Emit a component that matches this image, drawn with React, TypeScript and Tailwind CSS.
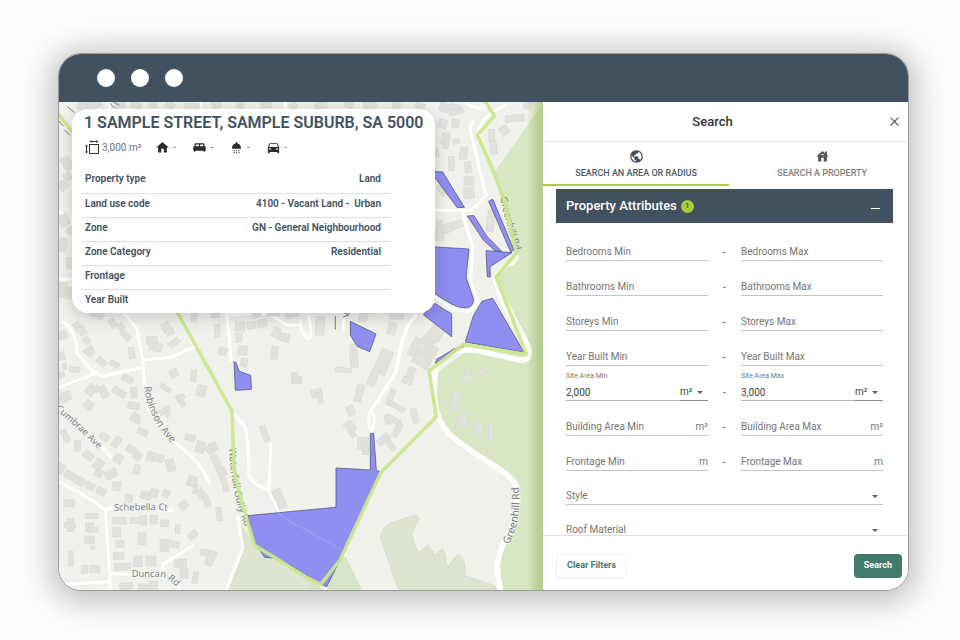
import React from "react";
import { MdClose, MdDirectionsCar, MdHome, MdHouse, MdKingBed, MdPublic, MdShower } from "react-icons/md";

/* ---------- Map ---------- */

type Box = [number, number, number, number, number];

// Building footprints: centre x, centre y, width, height, rotation.
const westBuildings: Box[] = [
  [20, 75, 26, 26, -20], [18, 138, 16, 24, -15], [64, 50, 20, 28, -30], [78, 62, 20, 28, -30], [92, 91, 20, 22, -35],
  [97, 120, 30, 16, -40], [104, 128, 22, 18, -40], [136, 155, 30, 20, 42], [176, 162, 30, 16, 28], [170, 40, 26, 20, 48],
  [194, 50, 18, 18, 48], [209, 76, 36, 18, 46], [227, 129, 18, 34, -8], [288, 92, 32, 24, 0], [299, 111, 38, 24, 10],
  [330, 52, 24, 30, -25], [342, 66, 24, 18, -25], [354, 98, 36, 18, -35], [414, 22, 16, 28, 5], [478, 16, 24, 14, 0], [484, 62, 16, 38, 0],
  [500, 124, 26, 22, 15], [552, 50, 28, 30, 5], [549, 84, 18, 28, 0], [586, 46, 26, 20, -10], [618, 40, 28, 22, -12],
  [660, 68, 20, 30, 22], [684, 82, 34, 24, 15], [656, 128, 20, 38, 5], [560, 121, 28, 28, 4], [564, 158, 20, 26, 10],
  [715, 204, 18, 34, 0], [724, 210, 24, 20, 0], [700, 14, 26, 14, -20], [56, 179, 30, 16, 6], [25, 170, 12, 18, 0], [16, 194, 18, 16, -20],
  [214, 206, 34, 20, 26], [105, 240, 28, 32, 42], [122, 236, 18, 18, 42], [142, 246, 22, 36, -28], [190, 247, 42, 20, 30], [233, 248, 18, 32, -3],
  [30, 258, 30, 26, -14], [22, 268, 24, 18, 0], [98, 285, 28, 24, 38], [233, 287, 34, 20, 10], [236, 322, 22, 26, 35],
  [246, 332, 12, 18, 20], [260, 366, 32, 18, 25], [328, 234, 34, 14, 33], [354, 190, 24, 24, -28], [413, 197, 16, 36, 4],
  [436, 242, 28, 34, 12], [374, 272, 14, 38, -32], [374, 264, 26, 14, -32], [326, 302, 34, 16, -32], [336, 312, 14, 16, 40], [626, 371, 18, 48, -18],
  [28, 378, 18, 38, -28], [64, 407, 18, 32, 0], [97, 437, 22, 32, -50], [127, 464, 26, 32, 35], [128, 490, 22, 22, 30], [145, 381, 28, 20, 28],
  [182, 396, 20, 34, 38], [187, 446, 26, 26, 28], [165, 492, 36, 24, -26], [13, 474, 24, 28, 30], [40, 495, 30, 22, 30],
  [70, 513, 32, 24, 28], [102, 528, 28, 20, 28], [135, 544, 28, 20, 24], [181, 529, 24, 26, 10], [242, 478, 18, 28, 14],
  [225, 418, 26, 20, 28], [244, 438, 24, 24, 40], [284, 440, 22, 28, 14], [308, 444, 28, 22, 18], [343, 466, 26, 36, -12],
  [402, 383, 30, 18, 16], [433, 411, 26, 34, 16], [464, 418, 28, 26, 38], [474, 410, 18, 26, -30], [480, 454, 20, 38, -24],
  [497, 486, 26, 28, -26], [506, 524, 16, 42, -18], [408, 514, 28, 30, 18], [418, 536, 10, 30, 18], [435, 552, 22, 30, -32], [452, 574, 18, 34, -20],
  [382, 586, 26, 24, -40], [489, 612, 16, 40, -8], [218, 565, 22, 24, 0], [266, 555, 24, 24, 18], [294, 549, 24, 24, 20],
  [272, 563, 26, 12, 20], [330, 550, 20, 22, 22], [40, 580, 32, 22, 2], [44, 645, 18, 40, 0], [42, 646, 32, 16, 0],
  [107, 618, 38, 16, 2], [100, 652, 24, 26, 0], [112, 660, 28, 14, 0], [100, 690, 30, 24, 0], [110, 714, 14, 8, 0],
  [45, 747, 16, 44, 0], [86, 778, 18, 24, 0], [116, 777, 32, 20, 0], [190, 632, 42, 20, 0], [236, 632, 28, 18, 0],
  [262, 631, 20, 28, 0], [293, 629, 22, 26, 0], [326, 640, 24, 20, 5], [182, 667, 24, 28, 0], [192, 702, 24, 20, 0],
  [258, 686, 24, 36, 0], [325, 706, 26, 36, 0], [350, 702, 40, 20, 12], [365, 657, 14, 26, 0], [410, 675, 30, 20, -38],
  [188, 738, 32, 20, 0], [246, 754, 26, 32, 0], [285, 753, 30, 30, 0], [200, 770, 50, 20, -3], [373, 760, 38, 26, 0],
  [384, 790, 24, 30, 0], [418, 803, 16, 34, 10], [455, 730, 44, 20, 12], [464, 746, 22, 44, 26], [210, 829, 38, 20, -5],
  [292, 826, 26, 24, 0], [262, 830, 30, 16, 0], [670, 566, 26, 58, -24],
];

const centreBuildings: Box[] = [
  [60, 48, 26, 56, 4], [290, 18, 40, 20, 0], [190, 20, 24, 34, 18], [276, 56, 24, 36, 12], [162, 146, 24, 52, -6], [158, 112, 16, 20, 0],
  [130, 180, 48, 14, 6], [250, 156, 38, 74, 22], [220, 202, 24, 52, 22], [178, 250, 22, 52, 14], [50, 250, 32, 24, -14],
  [60, 262, 14, 34, -14], [152, 302, 22, 30, -20], [150, 350, 26, 34, -40], [158, 372, 16, 22, -30], [190, 400, 34, 34, 0],
  [196, 420, 20, 28, 0], [272, 262, 16, 50, 22], [290, 290, 52, 14, 30], [262, 328, 16, 30, -10], [280, 330, 46, 18, 28],
  [292, 360, 18, 44, 30], [250, 388, 42, 20, -38], [268, 400, 16, 50, -38], [344, 318, 18, 44, -14], [354, 116, 44, 58, 26],
  [384, 118, 56, 36, 30], [366, 152, 54, 34, 30], [408, 72, 36, 40, 30], [330, 196, 22, 50, 22], [322, 212, 30, 20, 22],
];

const reserveBuildings: Box[] = [
  [545, 184, 22, 18, -20], [498, 206, 44, 14, -40], [508, 198, 14, 40, -35], [465, 274, 24, 54, 20], [488, 326, 26, 32, 2],
  [490, 342, 48, 12, 4], [537, 356, 24, 34, 18], [573, 369, 16, 46, 0], [571, 427, 10, 20, -35], [2, 214, 6, 16, 0],
];

const northBuildings: Box[] = [
  [72, 22, 26, 26, 20], [108, 34, 44, 20, -14], [104, 20, 26, 16, 10], [68, 71, 26, 26, 20], [106, 70, 22, 26, 10],
  [76, 116, 22, 36, 14], [80, 130, 14, 32, 14], [108, 124, 20, 16, -12], [132, 158, 22, 34, 6], [128, 168, 18, 20, 0], [48, 158, 16, 26, -14],
  [94, 191, 18, 42, 0], [144, 202, 20, 32, -8], [147, 243, 30, 28, 2], [147, 279, 32, 32, -4], [284, 55, 56, 20, -6],
  [253, 91, 26, 26, -36], [215, 106, 18, 36, 0], [220, 142, 20, 42, -8], [322, 14, 20, 24, 10], [66, 272, 18, 34, -30],
  [60, 386, 18, 50, -4], [58, 402, 24, 44, -4], [84, 384, 36, 26, -18], [112, 374, 30, 22, -18], [212, 364, 22, 62, 8], [44, 700, 36, 46, 36],
  [18, 736, 40, 46, 28],
];

const edgeBuildings: Box[] = [
  [20, 190, 26, 40, -30], [8, 258, 26, 28, 40], [22, 230, 22, 22, -35], [12, 360, 30, 34, -30], [30, 392, 20, 22, 40],
  [8, 434, 22, 40, 10], [28, 490, 18, 34, 0], [10, 570, 22, 44, 0], [26, 580, 16, 34, 0], [96, 14, 56, 24, -20], [66, 20, 30, 20, 20],
  [180, 12, 30, 22, -14], [228, 16, 34, 18, 10], [278, 14, 22, 18, 0], [330, 16, 28, 22, 30], [396, 18, 44, 14, 0],
  [470, 14, 26, 22, -20], [540, 16, 22, 18, 20], [618, 14, 34, 20, 0], [700, 18, 22, 18, -20], [782, 16, 36, 18, -8],
  [866, 14, 26, 18, 20], [930, 16, 38, 18, 0], [1010, 16, 26, 18, -20], [1080, 18, 28, 18, 20], [110, 642, 40, 22, 20],
  [590, 644, 26, 16, -20], [640, 640, 40, 16, 0], [700, 642, 30, 18, -20],
];

function Buildings({ boxes }: { boxes: Box[] }) {
  return (
    <g fill="#e2e2dc" stroke="#d6d6cf" strokeWidth="1.5">
      {boxes.map(([x, y, w, h, r], i) => (
        <rect key={i} x={x - w / 2} y={y - h / 2} width={w} height={h} transform={`rotate(${r} ${x} ${y})`} />
      ))}
    </g>
  );
}

const WEST = "translate(56 310) scale(.33333)";
const CENTRE = "translate(300 310) scale(.33333)";
const NORTH = "translate(420 100) scale(.33333)";
const EDGE = "translate(60 100) scale(.33333)";

function SuburbMap() {
  return (
    <svg
      className="absolute inset-0 h-full w-full"
      viewBox="59 102 484 488"
      preserveAspectRatio="xMidYMid slice"
      role="img"
      aria-label="Suburb map"
    >
      <defs>
        <linearGradient id="edge" x1="0" x2="1">
          <stop offset="0" stopColor="#8fb14f" stopOpacity="0" />
          <stop offset=".65" stopColor="#8fb14f" stopOpacity=".4" />
          <stop offset="1" stopColor="#8fb14f" stopOpacity=".48" />
        </linearGradient>
        <path id="robinson" d="M264 230 Q276 330 355 408 L400 450" />
        <path id="cumbrae" d="M-2 298 Q60 350 130 420 L180 470" />
        <path id="duncan" d="M227 802 L318 802 Q340 806 370 838" />
        <path id="schebella" d="M174 602 L312 600 L350 604" />
        <path id="waterfall" d="M519 414 Q524 520 552 610 L592 720" />
        <path id="greenhill" d="M626 704 Q672 620 652 505" />
        <path id="greenhillNorth" d="M240 292 Q260 380 290 470 L310 530" />
      </defs>

      <rect x="59" y="102" width="484" height="488" fill="#eff1ea" />

      {/* Reserves */}
      <path d="M543 103 L494 173 L516 252 L498 277 L530 357 L500 352 L465 352 L438 372 L436 410 L450 436 L490 462 L512 476 L519 495 L512 530 L499 550 L497 570 L500 590 H543Z" fill="#d8e6c3" />
      <g transform={CENTRE}>
        <path d="M296 840 L241 682 Q244 650 275 638 Q310 624 350 615 L357 628 L335 668 Q340 700 355 728 Q368 718 385 704 L403 735 L427 716 L434 728 Q438 760 444 774 Q462 738 475 735 Q490 740 493 762 L498 798 L585 827 L590 840Z" fill="#dde5d1" stroke="#cfd8c2" strokeWidth="2" />
        <path d="M135 735 L186 840 H0 L0 790 L62 823Z" fill="#d8e4c8" />
      </g>
      <g transform={WEST}>
        <path d="M555 640 L560 715 L510 840 H760 V806 L595 705Z" fill="#dde5d1" />
      </g>

      {/* Roads */}
      <g fill="none" stroke="#ffffff" strokeLinecap="round" strokeLinejoin="round">
        <g transform={WEST} strokeWidth="9">
          <path d="M20 36 Q60 58 64 130 L112 186 L142 198 L250 174" />
          <path d="M0 236 L124 188" />
          <path d="M200 4 L244 58 L260 150 Q264 230 278 300 Q320 370 370 408 Q430 450 460 518" />
          <path d="M264 150 L345 142 L412 112" />
          <path d="M136 410 L164 440" />
          <path d="M0 512 Q100 560 148 600 L164 840" />
          <path d="M148 600 L170 592 L350 602" />
          <path d="M164 792 L320 794 L322 762 L410 708" />
          <path d="M0 824 L160 815" />
          <path d="M350 800 L372 840" />
          <path d="M532 310 L566 350 Q580 400 578 490 Q582 520 638 540 L645 404" />
          <path d="M638 540 L666 598" />
          <path d="M546 620 L560 715 L510 842" />
          <path d="M512 8 L526 150" />
          <path d="M508 14 L640 10 L690 44 L732 46 L750 80" />
        </g>
        <g transform={CENTRE}>
          <path d="M350 14 Q320 40 305 100 L286 190 L214 300" strokeWidth="11" />
          <path d="M214 298 Q196 330 214 366 Q232 330 214 298Z" strokeWidth="8" />
          <path d="M130 20 V60 M0 30 Q6 80 24 86 Q40 84 26 20" strokeWidth="8" />
          <path d="M606 -40 L686 112 Q696 156 660 150 L520 120 Q460 118 430 140 Q400 170 402 250 Q406 330 452 376 Q500 416 560 452 Q640 500 650 530 Q660 580 636 650 Q590 730 592 780 L602 842" strokeWidth="16" />
          <path d="M60 824 L80 840 M135 735 L120 722" strokeWidth="10" />
        </g>
        <g transform={NORTH}>
          <path d="M130 0 Q170 40 200 14" strokeWidth="10" />
          <path d="M258 14 Q180 50 174 100 L190 140" strokeWidth="8" />
          <path d="M158 64 L150 86 L198 286 Q170 320 150 332 L46 330" strokeWidth="9" />
          <path d="M128 340 L158 440 L152 540 L172 600 Q166 632 140 634 L90 624 L44 590" strokeWidth="9" />
          <path d="M290 470 Q284 490 262 494 L222 532 L240 590 L330 755" strokeWidth="13" />
        </g>
        <g transform={EDGE} strokeWidth="9">
          <path d="M-6 330 L40 370 M-6 538 L40 536 M148 0 V30 M420 0 V30 M676 0 V30" />
        </g>
      </g>

      <g transform={WEST}><Buildings boxes={westBuildings} /></g>
      <g transform={CENTRE}>
        <Buildings boxes={centreBuildings} />
        <Buildings boxes={reserveBuildings} />
      </g>
      <g transform={NORTH}><Buildings boxes={northBuildings} /></g>
      <g transform={EDGE}><Buildings boxes={edgeBuildings} /></g>

      {/* Matching parcels */}
      <g fill="#908ff1" stroke="#5a5a86" strokeWidth="2.5" strokeLinejoin="round">
        <g transform={CENTRE}>
          <path d="M-157 617 L0 602 L108 592 V474 L211 480 V370 H221 L229 482 L240 484 L120 750 L80 830 L62 823 L-32 764 L-80 744 L-106 742 L-140 690Z" />
          <path d="M-65 608 Q-20 645 10 655 L125 720" fill="none" stroke="#9a99f4" strokeWidth="6" />
          <path d="M151 34 L228 72 L209 125 L172 109 L151 76Z" />
          <path d="M106 18 V58" fill="none" />
          <path d="M122 4 L146 14 L128 22 M150 8 L140 20" fill="none" stroke="#7b7e86" strokeWidth="3" />
          <path d="M406 160 L410 148 L460 118 L494 108Z" />
        </g>
        <g transform={WEST}>
          <path d="M534 155 L540 158 L550 184 L584 196 L586 238 L538 241Z" />
        </g>
        <g transform={NORTH}>
          <path d="M30 213 L68 216 L133 322 L112 323Z" />
          <path d="M142 348 L162 347 L200 408 L246 455 L224 452 L190 420Z" />
          <path d="M206 304 L218 297 L282 450 L272 456Z" />
          <path d="M198 452 L276 458 L210 500 L211 531 L202 530Z" />
          <path d="M30 440 L147 447 L138 532 L160 596 Q162 622 136 624 Q104 626 30 570Z" />
          <path d="M10 644 L44 610 L95 642 V710Z" />
          <path d="M136 726 L160 648 L186 604 L218 595 L312 757Z" />
        </g>
      </g>

      {/* Street names crossed by the boundary */}
      <g fill="#7b7e86" fontFamily="'Noto Sans', sans-serif" fontSize="29">
        <g transform={WEST}><text><textPath href="#waterfall">Waterfall Gully Rd</textPath></text></g>
        <g transform={NORTH}><text><textPath href="#greenhillNorth">Greenhill Rd</textPath></text></g>
      </g>

      {/* Suburb boundary */}
      <path
        d="M485 101 L494.5 116 L477.5 134.7 L494 172.7 L505 203 L516.5 253 L496 277 L526.5 354.5 L463.5 344.5 L429 371 L436.3 416.7 L380.7 472.7 L340 560 L320.7 584.3 L306 577 L254.3 545 L240 495 L234 470 L232 411 L177.7 313 L73 133 L57 112"
        fill="none"
        stroke="#cbe68c"
        strokeOpacity=".94"
        strokeWidth="3.6"
        strokeLinejoin="round"
      />

      {/* Street names */}
      <g fill="#7b7e86" stroke="#f4f5f1" strokeWidth="4" paintOrder="stroke" fontFamily="'Noto Sans', sans-serif" fontSize="28">
        <g transform={WEST}>
          <text fontSize="30"><textPath href="#robinson">Robinson Ave</textPath></text>
          <text><textPath href="#cumbrae">Cumbrae Ave</textPath></text>
          <text><textPath href="#duncan">Duncan Rd</textPath></text>
          <text><textPath href="#schebella">Schebella Ct</textPath></text>
        </g>
        <g transform={CENTRE}>
          <text fontSize="31"><textPath href="#greenhill">Greenhill Rd</textPath></text>
        </g>
      </g>
      <g transform={EDGE} fill="none" stroke="#7b7e86" strokeWidth="3">
        <path d="M22 20 L44 38 M150 10 L164 24 M160 6 L178 16 M-4 62 L10 78 M14 90 L30 106" />
      </g>

      <rect x="527" y="102" width="16" height="488" fill="url(#edge)" />
    </svg>
  );
}

/* ---------- Property card ---------- */

function LotSizeIcon() {
  return (
    <svg width="14" height="14" viewBox="0 0 14 14" fill="none" stroke="#333333" aria-hidden="true">
      <rect x="4.5" y="4.5" width="9" height="9" />
      <path d="M5 1.5H13M1.5 5V13" />
      <path d="M4.5 1.5L6.5 0V3ZM13.5 1.5L11.5 0V3ZM1.5 4.5L0 6.5H3ZM1.5 13.5L0 11.5H3Z" fill="#333333" stroke="none" />
    </svg>
  );
}

const details = [
  ["Property type", "Land"],
  ["Land use code", "4100 - Vacant Land - \u00a0Urban"],
  ["Zone", "GN - General Neighbourhood"],
  ["Zone Category", "Residential"],
  ["Frontage", ""],
  ["Year Built", ""],
];

function PropertyCard() {
  return (
    <article className="absolute left-[13px] top-[7px] w-[363px] rounded-2xl bg-white text-[#42515f] shadow-[0_4px_16px_rgba(0,0,0,0.18)]">
      <h2 className="whitespace-nowrap px-3 pt-1 text-base leading-5 font-semibold">1 SAMPLE STREET, SAMPLE SUBURB, SA 5000</h2>
      <ul className="flex h-[28px] items-center pl-[13px] text-[10px] text-gray-500">
        <li className="flex w-[70px] items-center gap-[3px] whitespace-nowrap"><LotSizeIcon />3,000 m²</li>
        {[MdHome, MdKingBed, MdShower, MdDirectionsCar].map((Icon, i) => (
          <li key={i} className="flex w-[37px] items-center gap-[3px]">
            <Icon size={15} color="#2b2b2b" />
            <span>-</span>
          </li>
        ))}
      </ul>
      <table className="mt-2 ml-[9px] w-[309px] border-collapse text-[10px] leading-5">
        <tbody>
          {details.map(([name, value]) => (
            <tr key={name} className="border-b border-[#dde1e4] last:border-b-0">
              <th scope="row" className="h-6 pb-[3px] pl-1 text-left align-top font-semibold">{name}</th>
              <td className="pr-[9px] pb-[3px] text-right align-top font-semibold">{value}</td>
            </tr>
          ))}
        </tbody>
      </table>
    </article>
  );
}

/* ---------- Search panel ---------- */

function Caret() {
  return (
    <svg className="pointer-events-none absolute right-1 top-1.5" width="8" height="5" viewBox="0 0 8 5" aria-hidden="true">
      <path d="M1 1H7L4 4Z" fill="#616161" />
    </svg>
  );
}

function TextField({ id, label, unit }: { id: string; label: string; unit?: string }) {
  return (
    <div className="flex flex-1 items-center border-b border-[#c4c4c4] leading-4">
      <label htmlFor={id} className="text-[#757575]">{label}</label>
      <input id={id} className="h-4 w-0 min-w-0 flex-1 bg-transparent outline-none" />
      {unit && <span className="text-[#757575]">{unit}</span>}
    </div>
  );
}

function AreaField({ id, label, value }: { id: string; label: string; value: string }) {
  return (
    <div className="flex flex-1 flex-col gap-0.5">
      <label htmlFor={id} className="text-[7px] leading-3 text-[#757575]">{label}</label>
      <div className="flex leading-4 text-[#424242]">
        <input id={id} defaultValue={value} className="h-[17px] w-0 min-w-0 flex-1 border-b border-[#b5b5b5] bg-transparent outline-none" />
        <div className="relative">
          <select aria-label={`${label} unit`} className="h-[17px] w-7 appearance-none border-b border-[#8c8c8c] bg-transparent outline-none">
            <option>m²</option>
          </select>
          <Caret />
        </div>
      </div>
    </div>
  );
}

function SelectField({ id, label }: { id: string; label: string }) {
  return (
    <div className="flex h-[34px] items-end">
      <div className="relative flex flex-1 items-center border-b border-[#c4c4c4] leading-4">
        <label htmlFor={id} className="text-[#757575]">{label}</label>
        <select id={id} className="h-4 flex-1 appearance-none bg-transparent outline-none" />
        <Caret />
      </div>
    </div>
  );
}

function RangeRow({ children }: { children: [React.ReactNode, React.ReactNode] }) {
  return (
    <div className="flex h-[35px] items-end">
      {children[0]}
      <span className="w-[33px] text-center leading-[17px] text-[#616161]">-</span>
      {children[1]}
    </div>
  );
}

function TextRange({ name, unit }: { name: string; unit?: string }) {
  const id = name.toLowerCase().replace(" ", "-");
  return (
    <RangeRow>
      <TextField id={`${id}-min`} label={`${name} Min`} unit={unit} />
      <TextField id={`${id}-max`} label={`${name} Max`} unit={unit} />
    </RangeRow>
  );
}

function SearchPanel() {
  return (
    <aside className="flex w-[365px] shrink-0 flex-col bg-white">
      <header className="relative flex h-10 shrink-0 items-center justify-center border-b border-[#e4e4e4]">
        <h1 className="mr-[26px] text-[13px] font-medium text-[#333333]">Search</h1>
        <button type="button" aria-label="Close" className="absolute right-[6px]">
          <MdClose size={15} color="#666666" />
        </button>
      </header>

      <div role="tablist" className="flex h-11 shrink-0 overflow-hidden text-[9px] leading-3 font-medium">
        <button type="button" role="tab" aria-selected="true" className="flex w-[51%] shrink-0 flex-col items-center gap-[3px] border-b-2 border-[#a6d147] pt-[7px] text-[#4c5a68]">
          <MdPublic size={15} color="#42515f" />
          SEARCH AN AREA OR RADIUS
        </button>
        <button type="button" role="tab" aria-selected="false" className="flex w-[51%] shrink-0 flex-col items-center gap-[3px] pt-[7px] text-[#808080]">
          <MdHouse size={15} color="#555555" />
          SEARCH A PROPERTY
        </button>
      </div>

      <div className="min-h-0 flex-1 overflow-hidden pt-[3px] pr-[15px] pl-[13px]">
        <button type="button" aria-expanded="true" className="flex h-[34px] w-full items-center bg-[#42515f] px-[10px] text-[13px] font-medium text-white">
          Property Attributes
          <span className="ml-1 flex size-[13px] items-center justify-center rounded-full bg-[#a6ce39] text-[8px] text-[#42515f]">1</span>
          <span className="mt-1 mr-[3px] ml-auto h-px w-[9px] bg-white" />
        </button>
        <form className="px-[10px] pt-[3px] text-[10px]">
          <TextRange name="Bedrooms" />
          <TextRange name="Bathrooms" />
          <TextRange name="Storeys" />
          <TextRange name="Year Built" />
          <RangeRow>
            <AreaField id="site-area-min" label="Site Area Min" value="2,000" />
            <AreaField id="site-area-max" label="Site Area Max" value="3,000" />
          </RangeRow>
          <TextRange name="Building Area" unit="m²" />
          <TextRange name="Frontage" unit="m" />
          <SelectField id="style" label="Style" />
          <SelectField id="roof-material" label="Roof Material" />
        </form>
      </div>

      <footer className="flex h-[55px] shrink-0 items-center justify-between border-t border-[#e0e0e0] pt-[5px] pr-[6px] pl-[13px] text-[9px] font-bold">
        <button type="button" className="h-6 rounded-sm border border-[#eeeeee] px-[10px] text-[#427b6c]">Clear Filters</button>
        <button type="button" className="h-6 rounded-sm bg-[#427b6c] px-[10px] text-white">Search</button>
      </footer>
    </aside>
  );
}

export default function App() {
  return (
    <div className="flex h-screen bg-[#fdfdfd] pt-[53px] pr-[51px] pb-[49px] pl-[58px] font-[Roboto,sans-serif]">
      <div className="flex min-w-0 flex-1 flex-col overflow-hidden rounded-[23px] border border-[#9b9b9b] bg-white shadow-[0_4px_30px_8px_rgba(0,0,0,0.24)]">
        <div className="flex h-12 shrink-0 items-center gap-4 bg-[#42515f] pl-[38px]">
          <span className="size-[18px] rounded-full bg-white" />
          <span className="size-[18px] rounded-full bg-white" />
          <span className="size-[18px] rounded-full bg-white" />
        </div>
        <div className="flex min-h-0 flex-1">
          <main className="relative min-w-0 flex-1 overflow-hidden">
            <SuburbMap />
            <PropertyCard />
          </main>
          <SearchPanel />
        </div>
      </div>
    </div>
  );
}
